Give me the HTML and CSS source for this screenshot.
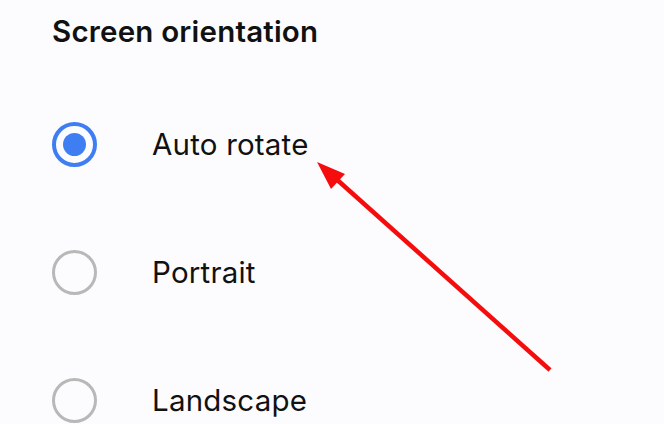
FILE: index.html
```html
<!DOCTYPE html>
<html>
<head>
<meta charset="utf-8">
<link rel="stylesheet" href="styles.css">
</head>
<body>
<div class="page">
  <h1 class="title">Screen orientation</h1>
  <div class="list">
    <div class="row">
      <span class="radio radio-on"><span class="dot"></span></span>
      <span class="label">Auto rotate</span>
    </div>
    <div class="row">
      <span class="radio"></span>
      <span class="label">Portrait</span>
    </div>
    <div class="row">
      <span class="radio"></span>
      <span class="label">Landscape</span>
    </div>
  </div>
  <svg class="arrow" width="664" height="424" viewBox="0 0 664 424">
    <line x1="550" y1="370" x2="334" y2="177" stroke="#f50d0d" stroke-width="4.5"/>
    <polygon points="317,162 345,174 331,189" fill="#f50d0d"/>
  </svg>
</div>
</body>
</html>
```
FILE: styles.css
```css
html, body {
  margin: 0;
  padding: 0;
  background: #fcfcfe;
}
.page {
  position: relative;
  width: 664px;
  height: 424px;
  overflow: hidden;
  font-family: Inter, "Noto Sans", sans-serif;
  color: #111;
  padding-left: 52px;
  box-sizing: border-box;
}
.title {
  margin: 0;
  padding-top: 11px;
  height: 69px;
  font-size: 29.5px;
  line-height: 40px;
  font-weight: 600;
  letter-spacing: 0.2px;
}
.list {
  display: flex;
  flex-direction: column;
}
.row {
  display: flex;
  align-items: center;
  height: 128px;
  gap: 55px;
}
.radio {
  width: 45px;
  height: 45px;
  box-sizing: border-box;
  border-radius: 50%;
  border: 3.5px solid #b8b8b8;
  display: flex;
  align-items: center;
  justify-content: center;
  flex: none;
}
.radio-on {
  border: 4px solid #3f7ef2;
}
.dot {
  width: 23px;
  height: 23px;
  border-radius: 50%;
  background: #3f7ef2;
}
.label {
  font-size: 29.5px;
  line-height: 40px;
  font-weight: 400;
  color: #111;
  letter-spacing: 0.2px;
}
.arrow {
  position: absolute;
  left: 0;
  top: 0;
}
```
